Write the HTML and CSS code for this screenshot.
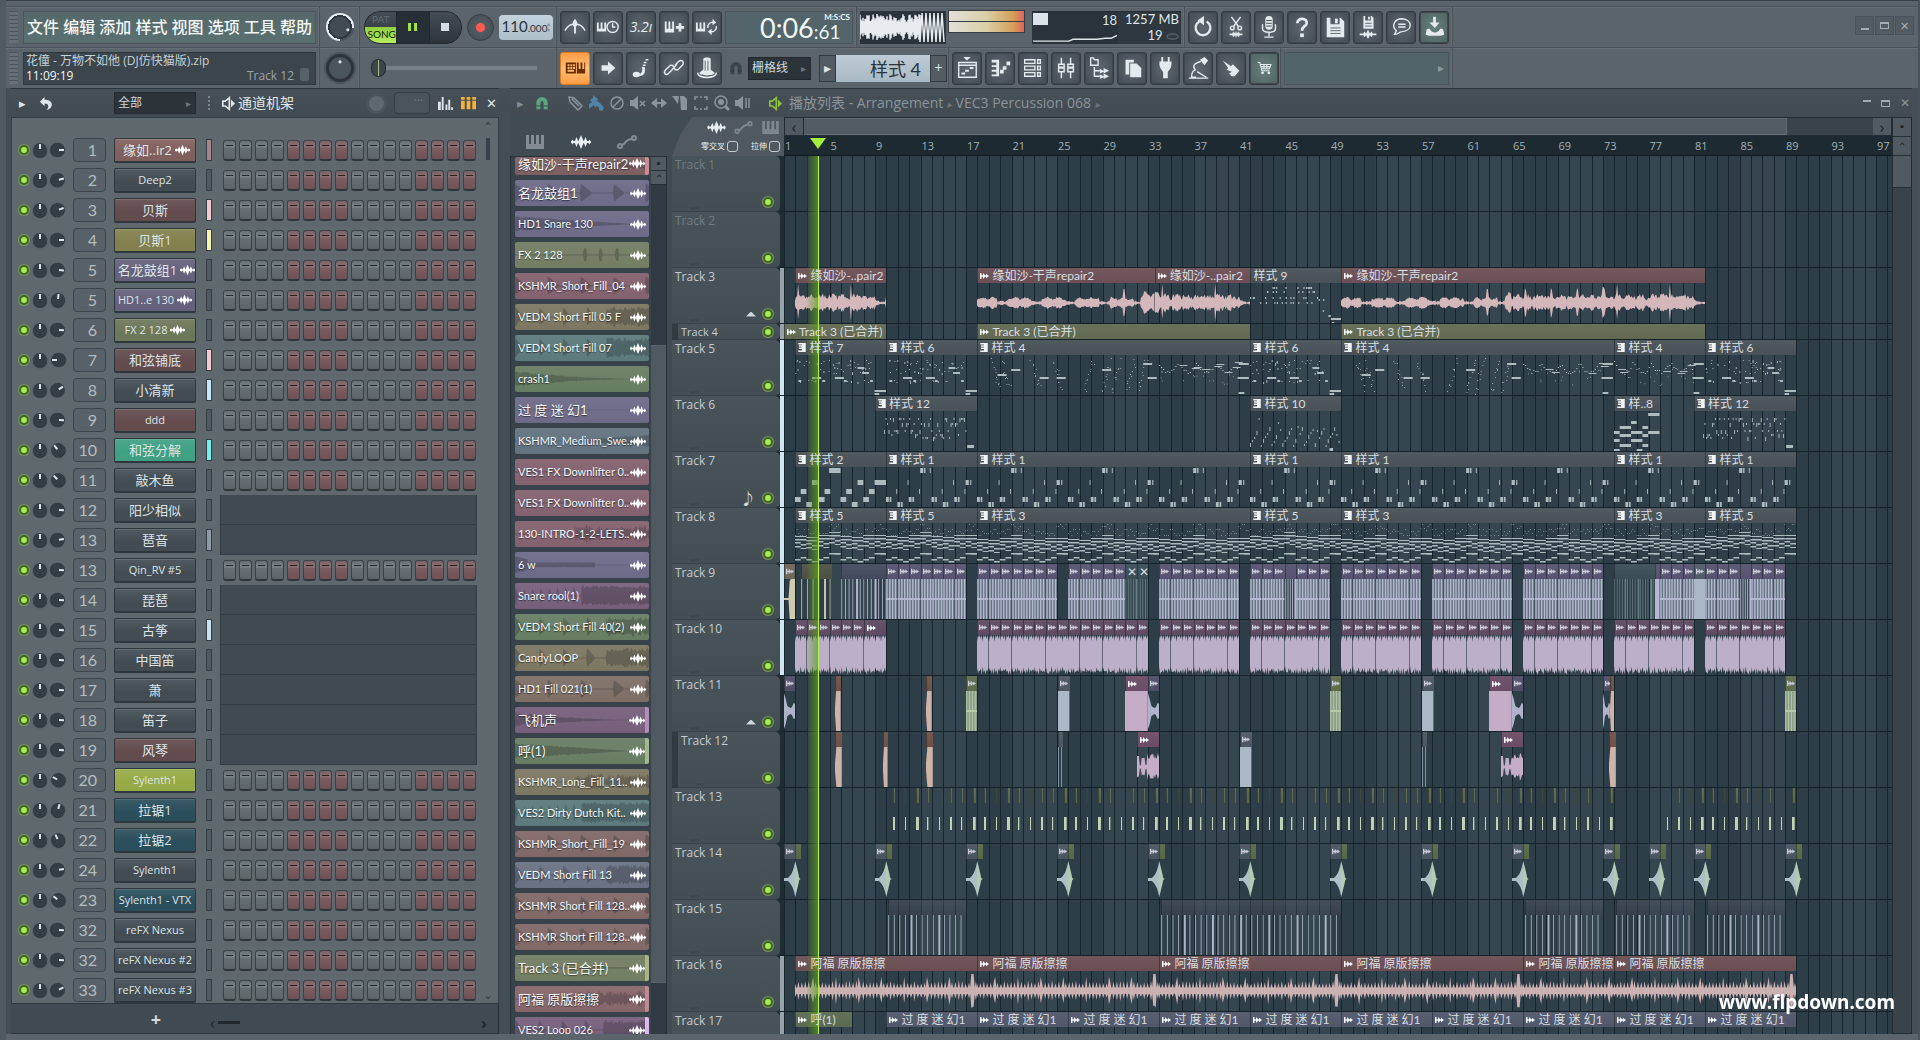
FILE: index.html
```html
<!DOCTYPE html>
<html lang="zh-CN">
<head>
<meta charset="utf-8">
<title>花僮 - 万物不如他 (DJ仿快猫版).zip</title>
<link rel="stylesheet" href="styles.css">
</head>
<body>
<svg class="defs" aria-hidden="true">
  <symbol id="i-wave" viewBox="0 0 20 14"><path d="M0 6h20v2H0zM10 0l3 7-3 7-3-7zM5.500 2L7.500 7l-2 5-2-5zM14.500 2l2 5-2 5-2-5zM1.500 4.500L3 7 1.500 9.500 0 7zM18.500 4.500L20 7l-1.500 2.500L17 7z"/></symbol>
  <symbol id="i-clip" viewBox="0 0 12 10"><path d="M0 1h2v3h2V1l3 3h1V2l4 3-4 3V6H7L4 9V6H2v3H0z"/></symbol>
  <symbol id="i-pat" viewBox="0 0 10 12"><path d="M0 0h10v12H0v-2h5V8H1V6h4V5H1V3h4V2H0z"/></symbol>
  <symbol id="i-keys" viewBox="0 0 18 14"><path d="M0 0h3v9h2V0h3v9h2V0h3v9h2V0h3v14H0z"/></symbol>
  <symbol id="i-auto" viewBox="0 0 20 14"><circle cx="3" cy="11" r="2"/><circle cx="17" cy="3" r="2"/><path d="M5 10C9 9 8 4 15 4" /></symbol>
  <symbol id="i-magnet" viewBox="0 0 14 16"><path d="M0 15V7a7 7 0 0 1 14 0v8H9V7a2 2 0 0 0-4 0v8z"/><path d="M0 11h5M9 11h5" stroke="#2d383f" fill="none"/></symbol>
  <symbol id="i-speaker" viewBox="0 0 16 16"><path d="M1 5h3l5-4v14l-5-4H1z" fill="none" stroke="currentColor" stroke-width="2"/><path d="M11 3l5 5-5 5z"/></symbol>
</svg>
<div class="app">
  <header class="toolbar">
    <div class="bar">
      <div class="group g-menu"><span class="grip"></span>
        <nav class="menu"><button>文件</button><button>编辑</button><button>添加</button><button>样式</button><button>视图</button><button>选项</button><button>工具</button><button>帮助</button></nav>
      </div>
      <div class="group g-knob"><input class="dial dial-ring" type="range" aria-label="主音量"></div>
      <div class="group g-transport">
        <div class="transport">
          <button class="patsong"><span>PAT</span><b>SONG</b></button>
          <button class="pause" aria-label="暂停"><i></i><i></i></button>
          <button class="stop" aria-label="停止"><i></i></button>
        </div>
        <button class="record" aria-label="录音"><i></i></button>
        <div class="tempo"><button aria-label="速度">110<small>.000</small></button><span>▴<br>▾</span></div>
      </div>
      <div class="group g-btns">
        <button class="tb" aria-label="节拍器"><svg viewBox="0 0 26 26"><path d="M11 7l2-3 2 3 1 3-2 3v7h-2v-7l-2-3z"/><path d="M2 17c4-7 7-7 11-7s7 0 11 7" class="ln"/></svg></button>
        <button class="tb" aria-label="等待输入"><svg viewBox="0 0 26 26"><path d="M1 8h2v7h2V8h2v7h2V8h2v10H1z"/><circle cx="18" cy="13" r="6" class="ln"/><path d="M18 9v4h3" class="ln"/></svg></button>
        <button class="tb digits" aria-label="预备拍">3.2ı</button>
        <button class="tb" aria-label="叠录"><svg viewBox="0 0 26 26"><path d="M3 7h2v8h2V7h2v8h2V7h2v12H3zM18 9h3v3h3v3h-3v3h-3v-3h-3v-3h3z"/></svg></button>
        <button class="tb" aria-label="循环录音"><svg viewBox="0 0 26 26"><path d="M1 8h2v7h2V8h2v7h2V8h2v10H1z"/><path d="M14 14a5 5 0 0 1 6-6M23 12a5 5 0 0 1-6 6" class="ln"/><path d="M19 4l4 4-4 3zM18 15l-4 3 4 4z"/></svg></button>
        <div class="clock"><span class="big">0:06</span><div class="side"><small>M:S:CS</small><span class="cs">:61</span></div></div>
      </div>
      <div class="group g-scope">
        <svg class="scope" viewBox="0 0 86 33" preserveAspectRatio="none" id="scope"></svg>
        <div class="vu"><i></i><i></i></div>
        <div class="cpu"><div class="cpu-l"><b></b><span>18</span><svg viewBox="0 0 84 16" preserveAspectRatio="none"><path d="M0 14h36l4-2h24l8-1h6l6-3" class="ln"/></svg></div>
          <div class="cpu-r"><span>1257 MB</span><span class="poly">19 <i></i></span></div></div>
      </div>
      <div class="group g-tools">
        <button class="tb" aria-label="撤销"><svg viewBox="0 0 26 26"><path d="M9 7a8 8 0 1 0 8 0" class="ln mid"/><path d="M14 1v10L7 6z"/></svg></button>
        <button class="tb" aria-label="剪切"><svg viewBox="0 0 26 26"><path d="M8 2l8 11M18 2l-8 11" class="ln"/><circle cx="9" cy="14" r="2" class="ln"/><circle cx="17" cy="14" r="2" class="ln"/><path d="M6 20h3l1-2 2 2 1-3 1 3 2-2 1 2h3v2h-3l-1 2-2-2-1 3-1-3-2 2-1-2H6z"/></svg></button>
        <button class="tb" aria-label="麦克风"><svg viewBox="0 0 26 26"><rect x="9" y="1" width="8" height="15" rx="4"/><path d="M6 10v5c0 5 14 5 14 0v-5M13 18v5M8 24h10" class="ln"/><path d="M10 6h6M10 9h6M10 12h6" stroke="#3a4247"/></svg></button>
        <button class="tb" aria-label="帮助"><svg viewBox="0 0 26 26"><path d="M8 9c0-7 11-6 10 0-1 4-5 3-5 8" class="ln bold"/><rect x="11" y="20" width="4" height="4"/></svg></button>
        <button class="tb" aria-label="保存"><svg viewBox="0 0 26 26"><path d="M4 3h15l4 4v17H4zM8 3v7h10V3z" fill-rule="evenodd"/><rect x="13" y="4" width="3" height="5"/><path d="M8 14h11M8 17h11M8 20h11" stroke="#59646a"/></svg></button>
        <button class="tb" aria-label="另存新版本"><svg viewBox="0 0 26 26"><path d="M8 1h9l2 2v12H8zM10 1v5h6V1z" fill-rule="evenodd"/><path d="M13 2h2v3h-2z"/><path d="M10 9h7M10 12h7" stroke="#59646a"/><path d="M4 20h4l1-2 2 2 2-4 2 4 2-2 1 2h4v2h-4l-1 2-2-2-2 4-2-4-2 2-1-2H4z"/></svg></button>
        <button class="tb" aria-label="消息"><svg viewBox="0 0 26 26"><path d="M6 21l2-4C2 12 6 4 14 4c12 1 12 13 0 14-3 0-3 3-8 3z" class="ln"/><path d="M10 10h8M10 13h8" class="ln"/></svg></button>
        <button class="tb teal" aria-label="下载"><svg viewBox="0 0 26 26"><path d="M12 2h3v6h4l-5 6-6-6h4zM5 16c1-2 4-1 4 0 2 4 8 4 10 0 0-1 3-2 4 0l1 5c0 2-20 2-20 0z"/></svg></button>
      </div>
      <div class="wincontrols"><button aria-label="最小化"><i class="mn"></i></button><button aria-label="最大化"><i class="mx"></i></button><button aria-label="关闭">✕</button></div>
    </div>
    <div class="bar">
      <div class="group g-menu"><span class="grip"></span>
        <div class="hint"><p>花僮 - 万物不如他 (DJ仿快猫版).zip</p><p><b>11:09:19</b><span>Track 12</span><i></i></p></div>
      </div>
      <div class="group g-knob"><input class="dial dial-dark" type="range" aria-label="主音高"></div>
      <div class="group g-transport"><input class="pitch" type="range" min="0" max="100" value="0" aria-label="歌曲位置"></div>
      <div class="group g-pattern">
        <button class="tb orange" aria-label="打字键盘"><svg viewBox="0 0 26 26"><path d="M3 7h11v12H3zM5 9v2h2V9zm3 0v2h2V9zm3 0v2h2V9zM5 12v2h2v-2zm3 0v2h2v-2zm3 0v2h2v-2zM5 15v2h7v-2zM15 7h2v7h2V7h2v7h2V7h1v12h-9z" fill-rule="evenodd"/></svg></button>
        <button class="tb" aria-label="继续"><svg viewBox="0 0 26 26"><path d="M6 10h7V6l8 7-8 7v-4H6z"/></svg></button>
        <button class="tb" aria-label="音符"><svg viewBox="0 0 26 26"><ellipse cx="8" cy="20" rx="4" ry="3"/><path d="M10 22c7 0 8-4 7-10h-3c1 5 0 7-4 8z"/><path d="M15 10h3M16 7h3M18 4h3" class="ln"/></svg></button>
        <button class="tb" aria-label="链接"><svg viewBox="0 0 26 26"><path d="M11 15l-4 4c-3 3-6-1-3-4l4-4c2-2 5-1 4 1M14 10l4-4c3-3 7 1 4 4l-4 4c-2 2-5 1-4-1M9 17l7-8" class="ln"/></svg></button>
        <button class="tb" aria-label="工具"><svg viewBox="0 0 26 26"><path d="M9 3c1-2 7-2 8 0v12l4 3c2 4-18 4-16 0l4-3z"/><path d="M3 18c-1 7 21 7 20 0" class="ln"/><path d="M11 5v11M14 5v11" stroke="#59646a"/></svg></button>
        <svg class="mag"><use href="#i-magnet"/></svg>
        <div class="sel snap"><select aria-label="吸附"><option>栅格线</option></select></div>
        <div class="patsel"><button aria-label="上一个">▸</button><input type="text" value="样式 4" aria-label="样式"><button aria-label="新建">+</button></div>
      </div>
      <div class="group g-windows">
        <button class="tb" aria-label="播放列表"><svg viewBox="0 0 26 26"><path d="M9 1h8l-4 4z"/><path d="M4 7h19v16H4zM4 10h19" class="ln"/><path d="M7 18h4v2H7zM11 15h4v2h-4zM16 12h4v2h-4z"/></svg></button>
        <button class="tb" aria-label="钢琴卷帘"><svg viewBox="0 0 26 26"><path d="M4 4h8v18H4v-2h5v-3H4v-2h5v-3H4v-2h5V7H4zM13 15h4v4h-4zM16 11h4v4h-4zM20 6h4v4h-4z"/></svg></button>
        <button class="tb" aria-label="通道机架"><svg viewBox="0 0 26 26"><path d="M4 4h11v4H4zM4 11h11v4H4zM4 18h11v4H4zM18 4h3v4h-3zM18 11h3v4h-3zM18 18h3v4h-3z" class="ln"/></svg></button>
        <button class="tb" aria-label="混音器"><svg viewBox="0 0 26 26"><path d="M8 2v6M8 18v6M18 2v6M18 18v6M5 9h6v3H5zM5 13h6v4H5zM15 9h6v3h-6zM15 13h6v4h-6z" class="ln"/></svg></button>
        <button class="tb" aria-label="浏览器"><svg viewBox="0 0 26 26"><path d="M4 2h3l1 2h4v6H4zM8 12v10h6M8 16h6" class="ln"/><path d="M14 14l4 2v-3l6 3-6 3v-2l-4 2zM14 20l4 2v-3l6 3-6 3v-2l-4 2z"/></svg></button>
        <button class="tb" aria-label="复制"><svg viewBox="0 0 26 26"><path d="M6 4h9v3h-5v13H6z"/><path d="M11 8h7l5 5v10H11z"/></svg></button>
        <button class="tb" aria-label="插件"><svg viewBox="0 0 26 26"><path d="M9 1h2v5h5V1h2v5h2v3c0 5-4 7-4 9v6h-5v-6c0-2-4-4-4-9V6h2z"/></svg></button>
        <button class="tb" aria-label="演奏"><svg viewBox="0 0 26 26"><path d="M15 4l5-3 4 4-4 5z"/><path d="M16 6c-8 2-9 5-6 9-3 1-4 3-4 8h5M3 24h21M12 17l10 6" class="ln"/></svg></button>
        <button class="tb" aria-label="触摸"><svg viewBox="0 0 26 26"><path d="M4 5l9 6 2-2 7 7-5 6c-6 0-4-2-6-3l3-2-6-2 2-2z"/></svg></button>
        <button class="tb teal" aria-label="商店"><svg class="sm" viewBox="0 0 26 26"><path d="M4 5h3l3 12h11M8 8h15l-2 6H10M13 8v6M17 8v6M9 11h12" class="ln"/><circle cx="11" cy="20" r="2"/><circle cx="20" cy="20" r="2"/></svg></button>
      </div>
      <div class="group g-news"><button class="news" aria-label="新闻">▸</button></div>
    </div>
  </header>

  <main class="desk">
    <section class="rack">
      <div class="title">
        <button class="ic" aria-label="选项">▸</button>
        <button class="ic" aria-label="撤销"><svg viewBox="0 0 16 16"><path d="M7 1v3c11 0 9 10 2 11 3-3 3-7-2-7v3L2 6z"/></svg></button>
        <div class="sel filter"><select aria-label="分组"><option>全部</option></select></div>
        <span class="dots"></span>
        <svg class="spk"><use href="#i-speaker"/></svg><h2>通道机架</h2>
        <span class="swing"></span><span class="lcd">···</span>
        <button class="ic" aria-label="图表"><svg viewBox="0 0 16 16"><path d="M0 6h3v9H0zM4 1h2v14H4zM8 9h2v6H8zM11 4h2v11h-2zM14 12h2v3h-2z"/></svg></button>
        <button class="ic gold" aria-label="步进"><svg viewBox="0 0 16 16"><path d="M0 1h4v3H0zM6 1h4v3H6zM12 1h4v3h-4zM0 5h4v9H0zM6 5h4v9H6zM12 5h4v9h-4z"/></svg></button>
        <button class="ic" aria-label="关闭">✕</button>
      </div>
      <div class="rackbody">
        <div class="channels" id="channels"></div>
        <div class="rackscroll"><span>⌃</span><i></i><b></b><span>⌄</span></div>
      </div>
      <div class="rackfoot"><button aria-label="添加通道">+</button><div><span>‹</span><i></i><b>›</b></div></div>
    </section>

    <section class="playlist">
      <div class="title">
        <button class="ic dim" aria-label="选项">▸</button>
        <svg class="pmag"><use href="#i-magnet"/></svg>
        <div class="ptools">
          <button aria-label="铅笔"><svg viewBox="0 0 16 16"><path d="M2 2l5 1 8 8-4 4-8-8zM5 4l7 7" class="ln"/></svg></button>
          <button class="blue" aria-label="画笔"><svg viewBox="0 0 16 16"><path d="M5 0l5 4-1 2 3 2 4 5-2 3-3-1v-3l-3-1-1 2-1-3-5 4V9l3-2-2-2 3-2z"/></svg></button>
          <button aria-label="删除"><svg viewBox="0 0 16 16"><circle cx="8" cy="8" r="6" class="ln"/><path d="M4 12l8-8" class="ln"/></svg></button>
          <button aria-label="静音"><svg viewBox="0 0 16 16"><path d="M0 5h3l5-4v14l-5-4H0z"/><path d="M10 6l5 5M15 6l-5 5" class="ln"/></svg></button>
          <button aria-label="滑移"><svg viewBox="0 0 16 16"><path d="M6 3v4h4V3l6 5-6 5V9H6v4L0 8z"/></svg></button>
          <button aria-label="切片"><svg viewBox="0 0 16 16"><path d="M0 1h7l-1 8zM8 1h4l3 3v11H9z"/></svg></button>
          <button aria-label="选择"><svg viewBox="0 0 16 16"><path d="M2 5V2h3M11 2h3v3M14 11v3h-3M5 14H2v-3M7 2h2M7 14h2" class="ln"/></svg></button>
          <button aria-label="缩放"><svg viewBox="0 0 16 16"><circle cx="7" cy="7" r="6" class="ln"/><circle cx="7" cy="7" r="3"/><path d="M11 11l4 4" class="ln th"/></svg></button>
          <button aria-label="回放"><svg viewBox="0 0 16 16"><path d="M0 5h3l5-4v14l-5-4H0z"/><path d="M11 3v10M14 3v10" class="ln"/></svg></button>
        </div>
        <svg class="spk green"><use href="#i-speaker"/></svg>
        <h2>播放列表 - Arrangement <i>▸</i> VEC3 Percussion 068 <i>▸</i></h2>
        <div class="pwin"><button aria-label="最小化"><i class="mn"></i></button><button aria-label="最大化"><i class="mx"></i></button><button aria-label="关闭">✕</button></div>
      </div>
      <div class="pbody">
        <aside class="picker">
          <div class="tabs"><svg viewBox="0 0 18 14"><use href="#i-keys"/></svg><svg class="on" viewBox="0 0 20 14"><use href="#i-wave"/></svg><svg class="line" viewBox="0 0 20 14"><use href="#i-auto"/></svg></div>
          <div class="plist"><div class="items" id="items"></div><div class="pscroll"><span>▪</span><span>⌃</span><i></i></div></div>
        </aside>
        <div class="arr">
          <div class="top">
            <div class="corner"><div class="ctabs"><svg class="on" viewBox="0 0 20 14"><use href="#i-wave"/></svg><svg class="line" viewBox="0 0 20 14"><use href="#i-auto"/></svg><svg viewBox="0 0 18 14"><use href="#i-keys"/></svg></div>
              <div class="cchk"><label>零交叉<input type="checkbox"></label><label>拉伸<input type="checkbox"></label></div></div>
            <div class="rul"><div class="hscroll"><button aria-label="向左">‹</button><div><i></i></div><button aria-label="向右">›</button></div><div class="ruler" id="ruler"></div></div>
          </div>
          <div class="tracks" id="tracks"><div class="timeline"><svg id="grid"></svg></div><div class="timeline over"><i class="playhead"></i></div></div>
        </div>
        <div class="vscroll"><span>▪</span><span>⌃</span><i></i></div>
      </div>
    </section>
  </main>
  <div class="mark">www.flpdown.com</div>
</div>
<script src="app.js"></script>
</body>
</html>
```

FILE: styles.css
```css
* { box-sizing: border-box; }
:root {
  --ui: "Open Sans", "Noto Sans CJK SC", sans-serif;
  --narrow: Lato, "Noto Sans CJK SC", sans-serif;
  --ink: #dfe6ea;
}
body { margin: 0; background: #5b646b; color: var(--ink); font: 12px/16px var(--ui); overflow: hidden; }
button, input, select { font: inherit; color: inherit; border: 0; padding: 0; margin: 0; background: none; border-radius: 0; outline: 0; }
h2, p { margin: 0; font-weight: 400; }
svg { fill: currentColor; display: block; }
.defs { position: absolute; width: 0; height: 0; }
.ln { fill: none; stroke: currentColor; stroke-width: 1.5; }
.mid { stroke-width: 2.5; }
.th { stroke-width: 3; }
.bold { stroke-width: 3; }
.line { fill: none; stroke: currentColor; stroke-width: 2; }
.app { height: 100vh; display: flex; flex-direction: column; border-left: 6px solid #505a61; border-right: 2px solid #48525a; overflow: hidden; }

/* toolbar */
.toolbar { flex: none; padding-top: 5px; border-top: 1px solid #363f46; background: #5b646b; }
.bar { height: 41px; display: flex; border-top: 1px solid #49525a; box-shadow: inset 0 1px #656e75; }
.group { display: flex; align-items: center; border-right: 1px solid #49525a; box-shadow: inset -1px 0 #646d74; flex: none; }
.g-menu { width: 314px; gap: 5px; padding-left: 3px; }
.grip { width: 9px; height: 32px; background: repeating-linear-gradient(#4c555c 0 1px, #666f76 1px 4px); }
.menu { width: 293px; height: 33px; display: flex; justify-content: space-around; align-items: center; padding: 0 1px; background: linear-gradient(#566869, #5a7070); border: 1px solid #495759; color: #f0f6f6; font-size: 16px; font-weight: 500; }
.hint { width: 293px; height: 33px; background: #3c454c; border: 1px solid #2f383e; padding: 0 2px; font-size: 12px; color: #c6d1d6; line-height: 15px; }
.hint p { display: flex; }
.hint b { font-weight: 400; flex: 1; color: #f0f6f8; }
.hint span { color: #98a3a9; }
.hint i { width: 9px; height: 13px; margin: 0 4px 0 6px; border-radius: 2px; background: #566067; }
.g-knob { width: 40px; justify-content: center; }
.dial { appearance: none; width: 28px; height: 28px; border-radius: 50%; }
.dial::-webkit-slider-thumb, .kn::-webkit-slider-thumb { appearance: none; width: 0; height: 0; }
.dial-ring { background: radial-gradient(circle at 78% 60%, #cfd8dc 0 1px, transparent 2px), radial-gradient(#414b52 0 10px, #2e373d 10px 12px, transparent 12px), conic-gradient(#e4ebee 0 95deg, #4a545b 95deg 180deg, #e4ebee 180deg); }
.dial-dark { border: 3px solid #2b3338; background: radial-gradient(circle at 50% 22%, #e0e8ec 0 1px, #4b555c 2px); box-shadow: 0 0 0 2px #49535a; }
.g-transport { width: 197px; padding: 0 5px 0 4px; gap: 5px; }
.transport { display: flex; width: 98px; height: 33px; border-radius: 16px; overflow: hidden; border: 1px solid #23292e; background: #23292e; gap: 1px; flex: none; }
.transport button { flex: 1; background: linear-gradient(#444d54, #2d353b); display: flex; align-items: center; justify-content: center; gap: 3px; }
.transport .patsong { flex-direction: column; gap: 0; justify-content: stretch; font: 10px/15px var(--narrow); color: #606a70; }
.patsong b { width: 100%; flex: 1; padding-left: 2px; background: linear-gradient(#8fce3c, #b6ee62); color: #10180a; font-weight: 400; }
.transport .pause { background: #272f36; }
.pause i { width: 3px; height: 8px; background: #a2e043; }
.stop i { width: 8px; height: 8px; background: #d6dde0; }
.record { width: 27px; height: 27px; flex: none; border-radius: 50%; border: 1px solid #343d43; background: radial-gradient(#59636a, #414a50); display: grid; place-items: center; }
.record i { width: 9px; height: 9px; border-radius: 50%; background: #ff5a50; }
.tempo { width: 54px; height: 25px; flex: none; border-radius: 4px; background: linear-gradient(#c3d2dc, #aebfca); color: #2b353c; display: flex; align-items: center; justify-content: center; font: 15px/24px var(--narrow); white-space: nowrap; }
.tempo small { font-size: 10px; }
.tempo span { font-size: 6px; line-height: 6px; color: #7f8f99; }
.pitch { appearance: none; width: 166px; height: 20px; margin-left: 7px; background: linear-gradient(#768086, #768086) 0 50% / 100% 4px no-repeat; }
.pitch::-webkit-slider-thumb { appearance: none; width: 15px; height: 18px; border-radius: 8px; border: 1px solid #1d2428; background: linear-gradient(90deg, #3d464b 6px, #a9bd92 6px 7px, #3d464b 7px); }
.g-btns { width: 300px; padding-left: 3px; gap: 3px; }
.tb { width: 30px; height: 33px; flex: none; border-radius: 3px; border: 1px solid #343c42; background: radial-gradient(#5d676d, #434c52); display: grid; place-items: center; color: #e4ebee; box-shadow: inset 0 0 0 1px #3e474d; }
.tb svg { width: 24px; height: 24px; }
.tb svg.sm { width: 18px; height: 18px; }
.tb.teal { background: radial-gradient(#66807c, #50625f); }
.tb.orange { background: linear-gradient(#ff9c42, #ffc078, #ff9c42); border-color: #e07a20; box-shadow: none; color: #6b2c00; }
.digits { font: italic 14px/20px var(--ui); }
.clock { flex: 1; height: 33px; margin-right: 3px; background: #53646a; border: 1px solid #49575b; display: flex; align-items: center; padding: 0 2px 0 34px; color: #eef7f6; font-family: var(--narrow); }
.clock .big { font-size: 27px; line-height: 31px; }
.clock .side { flex: 1; display: flex; flex-direction: column; }
.clock .cs { font-size: 19px; line-height: 20px; }
.clock small { font: 700 8px/9px var(--narrow); text-align: right; }
.g-scope { width: 328px; padding-left: 3px; gap: 2px; }
.scope { width: 86px; height: 33px; background: #2a333a; color: #e6ecef; flex: none; }
.vu { width: 77px; height: 23px; align-self: flex-start; margin-top: 3px; border: 1px solid #353d43; display: flex; flex-direction: column; gap: 1px; background: #353d43; flex: none; }
.vu i { flex: 1; background: linear-gradient(90deg, #e2e0da, #d9cfa6 50%, #d3a05a 85%, #e0645a); }
.cpu { width: 149px; height: 33px; margin-left: 5px; background: #2f383f; display: flex; font: 13px/15px var(--narrow); border-top: 1px solid #262e34; }
.cpu-l { width: 86px; display: grid; grid-template: 15px 1fr / 1fr auto; padding: 1px; background: #2a333a; }
.cpu-l b { width: 15px; height: 12px; background: #dbe4e8; }
.cpu-l svg { grid-column: 1 / 3; width: 84px; height: 15px; }
.cpu-r { flex: 1; text-align: right; padding: 0 2px; display: flex; flex-direction: column; }
.poly i { display: inline-block; width: 13px; height: 7px; border-radius: 50%; border: 2px solid #4d575d; }
.poly { padding-top: 1px; }
.g-tools { width: 268px; padding-left: 3px; gap: 3px; }
.wincontrols { margin-left: auto; display: flex; gap: 1px; padding: 9px 4px 0 0; }
.wincontrols button { width: 19px; height: 19px; border: 1px solid #49525a; color: #a5aeb3; font-size: 11px; display: grid; place-items: center; line-height: 12px; background: #525b62; }
.mn { width: 8px; height: 2px; background: currentColor; align-self: end; margin-bottom: 4px; }
.mx { width: 9px; height: 7px; border: 1px solid currentColor; border-top-width: 2px; }
.g-pattern { width: 392px; padding-left: 3px; gap: 3px; }
.mag { width: 12px; height: 13px; margin: 0 3px 0 5px; color: #3c454b; flex: none; }
.sel { background: #2c343a; border: 1px solid #23292e; color: #cfd8dc; display: flex; align-items: center; padding: 0 4px 0 3px; flex: none; }
.sel::after { content: "▸"; font-size: 10px; color: #6d777d; }
.sel select { appearance: none; flex: 1; min-width: 0; font-size: 12px; line-height: 16px; }
.snap { width: 63px; height: 23px; }
.filter { width: 82px; height: 22px; margin-left: 54px; }
.patsel { display: flex; align-items: center; margin-left: 5px; }
.patsel button { width: 17px; height: 27px; border: 1px solid #32393f; background: #525c62; font-size: 14px; line-height: 20px; }
.patsel input { width: 94px; height: 27px; background: linear-gradient(#bccbd5, #aabac5); color: #2b343a; text-align: right; padding-right: 9px; font: 18px/24px var(--narrow); }
.g-windows { width: 332px; padding-left: 3px; gap: 3px; }
.g-news { width: 172px; padding-left: 3px; }
.news { width: 165px; height: 33px; background: #526467; border: 1px solid #46565a; text-align: right; padding-right: 4px; color: #8a9a9c; }

/* windows */
.desk { flex: 1; min-height: 0; display: flex; padding-bottom: 6px; }
.title { height: 29px; flex: none; display: flex; align-items: center; border-top: 1px solid #2c353c; background: linear-gradient(#475056, #424b52); }
.title h2 { font-size: 14px; line-height: 20px; }
.ic { width: 16px; height: 18px; display: grid; place-items: center; font-size: 13px; line-height: 16px; }
.ic svg { width: 15px; height: 15px; }
.ic.dim { color: #808a90; }
.gold { color: #f2b33c; }
.spk { width: 13px; height: 15px; flex: none; }
.rack { width: 500px; flex: none; display: flex; flex-direction: column; border: 0 solid #434d54; border-width: 0 7px 0 5px; background: #414a51; box-shadow: inset -1px 0 #262f35; }
.rack .title { padding-left: 3px; gap: 7px; }
.rack .title h2 { margin-left: -4px; }
.dots { width: 2px; height: 15px; margin: 0 5px 0 5px; background: repeating-linear-gradient(#7c868c 0 2px, transparent 2px 4px); }
.swing { width: 21px; height: 21px; border-radius: 50%; margin-left: auto; border: 3px solid #4b545a; background: #5f686e; }
.lcd { width: 36px; height: 22px; border: 1px solid #333c42; border-radius: 4px; background: #4b545b; color: #6f797f; text-align: right; padding-right: 6px; }
.rackbody { flex: 1; min-height: 0; display: flex; overflow: hidden; background: #5f686d; border: 1px solid #343d44; border-bottom-color: #2f383e; padding-top: 17px; }
.channels { flex: 1; }
.ch { height: 30px; display: flex; align-items: center; gap: 8px; padding-left: 7px; }
.ctl { width: 46px; display: flex; align-items: center; gap: 4px; }
.led { appearance: none; width: 10px; height: 10px; flex: none; border-radius: 50%; border: 2px solid #3e6420; background: #a6ea55; box-shadow: 0 0 0 1px #7c9a62; }
.kn { appearance: none; width: 14px; height: 14px; flex: none; border-radius: 50%; background: linear-gradient(#dbe4e8, #dbe4e8) 50% 1px / 2px 5px no-repeat, #343d43; box-shadow: 0 1px 1px #2a3237; transform: rotate(var(--a, 0deg)); }
.num { width: 33px; height: 24px; border: 1px solid #3c454b; border-radius: 4px; background: #586167; color: #b4bdc1; font: 16px/22px var(--narrow); text-align: right; padding-right: 8px; }
.name { width: 82px; height: 25px; border: 1px solid #2e373d; border-bottom-width: 2px; border-radius: 2px; background: linear-gradient(rgb(255 255 255 / 8%), transparent 60%) var(--c); color: #dde4e7; font-size: 11px; line-height: 20px; white-space: nowrap; display: flex; align-items: center; justify-content: center; gap: 3px; box-shadow: inset 0 1px rgb(255 255 255 / 12%); }
.name.cjk { font-size: 13px; }
.name.cjk svg { margin-right: -3px; }
.name svg { width: 15px; height: 12px; color: #fff; flex: none; }
.peak { width: 6px; height: 22px; margin-left: 2px; border: 1px solid #343d43; background: var(--m, #505a61); }
.steps { display: flex; gap: 3px; padding-left: 3px; }
.step { appearance: none; width: 13px; height: 21px; border: 1px solid #3b4247; border-bottom: 2px solid #2f363a; border-radius: 3px; background: linear-gradient(#232a2e, #232a2e) 50% 4px / 7px 1px no-repeat, linear-gradient(#687176, #7a8388 35%, #666f73 38%, #5d6569); }
.step.r { background: linear-gradient(#2e1c1e, #2e1c1e) 50% 4px / 7px 1px no-repeat, linear-gradient(#7a6366, #8a7073 35%, #7c5d60 38%, #6e5255); }
.void { width: 257px; height: 30px; background: #414a51; border: 1px solid #343d43; border-width: 0 1px 1px; }
.rackscroll { width: 20px; display: flex; flex-direction: column; align-items: center; color: #363f45; margin-top: -16px; line-height: 16px; }
.rackscroll i { width: 4px; height: 22px; background: #38414a; margin-top: 3px; }
.rackscroll b { flex: 1; }
.rackfoot { height: 30px; display: flex; align-items: center; border-bottom: 1px solid #2d363c; }
.rackfoot button { width: 20px; margin-left: 135px; font-size: 18px; line-height: 20px; font-weight: 700; color: #d3dbdf; }
.rackfoot div { flex: 1; display: flex; align-items: center; gap: 3px; margin: 8px 12px 0 44px; font-size: 16px; color: #20282d; }
.rackfoot i { width: 22px; height: 3px; background: #20282d; }
.rackfoot b { margin-left: auto; }

.playlist { flex: 1; min-width: 0; display: flex; flex-direction: column; background: #414b52; border-left: 4px solid #434d54; border-right: 6px solid #454f56; }
.playlist .title { padding-left: 2px; color: #8a949a; }
.pmag { width: 12px; height: 13px; margin: 0 19px 0 8px; color: #5da582; flex: none; }
.ptools { display: flex; gap: 5px; }
.ptools svg { width: 16px; height: 16px; }
.ptools .blue { color: #4f84a8; }
.spk.green { color: #8bc43a; margin: 0 7px 0 18px; }
.playlist .title i { font-size: 10px; color: #69737a; }
.pwin { margin-left: auto; display: flex; gap: 4px; }
.pwin button { width: 15px; display: grid; place-items: center; height: 14px; line-height: 14px; }
.playlist .pwin .mn { align-self: start; margin-top: 4px; background: #a0a9ae; }
.playlist .pwin .mx { color: #a0a9ae; }
.pbody { flex: 1; min-height: 0; display: flex; }
.picker { width: 157px; flex: none; display: flex; flex-direction: column; }
.tabs { height: 39px; padding: 18px 0 0 15px; display: flex; gap: 26px; color: #828c92; }
.tabs svg { width: 20px; height: 14px; }
.on { color: #e8eef1; }
.plist { flex: 1; min-height: 0; display: flex; border: 1px solid #262f35; border-bottom: 0; background: #38424a; }
.items { flex: 1; min-width: 0; overflow: hidden; padding-left: 4px; display: flex; flex-direction: column; gap: 5px; }
.items .item:first-child { height: 18px; align-items: flex-start; }
.items .item:first-child span { line-height: 14px; }
.item { width: 134px; height: 26px; flex: none; border-radius: 2px; display: flex; align-items: center; position: relative; border: 0 solid var(--a); background: linear-gradient(rgb(255 255 255 / 6%), transparent) var(--c); color: #f4f7f8; font: 11px/24px var(--narrow); }
.item.cjk { font-size: 13px; }
.item.acc { border-right-width: 4px; }
.item .wv { position: absolute; inset: 2px 0; width: 100%; height: 22px; color: rgb(20 24 28 / 24%); }
.items .item:first-child .wv { height: 13px; }
.item span { flex: 1; min-width: 0; padding-left: 3px; white-space: nowrap; position: relative; text-shadow: 0 1px 1px rgb(0 0 0 / 50%); }
.item .ico { width: 16px; height: 13px; margin-right: 3px; flex: none; position: relative; color: #fff; }
.item.acc .ico { margin-right: 0; }
.pscroll { width: 15px; flex: none; background: #303a42; display: flex; flex-direction: column; align-items: center; color: #1c2429; overflow: hidden; }
.pscroll span, .vscroll span { width: 100%; height: 14px; line-height: 14px; font-size: 10px; text-align: center; background: #505a60; border-bottom: 1px solid #262f35; flex: none; }
.pscroll i { width: 100%; height: 638px; flex: none; margin-top: 160px; background: #4f5960; border: 1px solid #5c666c; border-width: 1px 0; }

.arr { flex: 1; min-width: 0; display: flex; flex-direction: column; margin-left: 5px; }
.top { height: 39px; display: flex; flex: none; }
.corner { width: 112px; padding: 4px 4px 0 20px; background: #4f595f; clip-path: polygon(20px 0, 100% 0, 100% 100%, 0 100%, 8px 18px); }
.ctabs { display: flex; gap: 8px; padding-left: 15px; color: #7d878d; }
.ctabs svg { width: 19px; height: 13px; }
.cchk { display: flex; justify-content: space-between; margin: 6px 0 0 9px; font-size: 8px; line-height: 12px; color: #e8eef0; }
.cchk label { display: flex; align-items: center; gap: 2px; }
.cchk input { appearance: none; width: 11px; height: 11px; border: 1px solid #c2cbd0; border-radius: 3px; }
.rul { flex: 1; min-width: 0; display: flex; flex-direction: column; }
.hscroll { height: 19px; display: flex; border: 1px solid #232c32; border-right: 0; }
.hscroll button { width: 19px; background: #505a60; color: #1c2429; font-size: 16px; line-height: 14px; flex: none; border-right: 1px solid #232c32; }
.hscroll div { flex: 1; background: #39434a; }
.hscroll i { display: block; width: 92%; height: 100%; background: #515b61; border: 1px solid #626c72; border-left: 0; }
.ruler { flex: 1; background: #1d2a31; position: relative; font: 11px/20px var(--ui); color: #a3b0b7; overflow: hidden; border-bottom: 1px solid #121b20; }
.ruler span { position: absolute; padding-left: 1px; }
.ruler i { position: absolute; top: 2px; margin-left: -8px; border: 8px solid transparent; border-top: 11px solid #a4ee3c; border-bottom: 0; }
.vscroll { width: 20px; background: #39434a; flex: none; border: 1px solid #232c32; color: #1c2429; }
.vscroll span { display: block; height: 19px; line-height: 19px; }
.vscroll i { display: block; height: 32px; background: #505a60; border-bottom: 1px solid #262f35; }
.tracks { flex: 1; min-height: 0; overflow: hidden; position: relative; background: #202c33; }
.timeline { position: absolute; left: 112px; right: 0; top: 0; bottom: 0; background: #2e3e48; }
.timeline svg { width: 100%; height: 100%; }
.timeline.over { background: none; pointer-events: none; z-index: 3; }
.playhead { position: absolute; left: 3.1%; margin-left: -11px; width: 12px; height: 100%; background: linear-gradient(90deg, rgb(84 130 40 / 10%), rgb(96 160 30 / 70%)); border-right: 1px solid #b4f05a; }
.track { display: flex; height: 56px; position: relative; }
.track.mini { height: 16px; }
.head { width: 108px; flex: none; position: relative; background: linear-gradient(#49535a, #434d54); border-bottom: 1px solid #3a434a; border-radius: 0 5px 5px 0; padding: 1px 3px; color: #c3ccd1; font-size: 12px; }
.head.off { color: #737d83; }
.head.sub { border-left: 6px solid #303a41; }
.mini .head { padding-top: 0; font-size: 11px; line-height: 15px; }
.head small { position: absolute; left: 18px; bottom: 0; color: #363f45; font-weight: 700; line-height: 12px; }
.head .tail { position: absolute; right: 7px; bottom: 4px; display: flex; align-items: center; gap: 7px; font-size: 16px; line-height: 10px; color: #d7dfe3; }
.head .tail b { width: 10px; height: 5px; background: #d0d8dc; clip-path: polygon(50% 0, 100% 100%, 0 100%); }
.mini .head .tail { bottom: 2px; }
.strip { width: 4px; flex: none; background: var(--s, #202c33); border-bottom: 1px solid #16222a; }
.lane { flex: 1; min-width: 0; position: relative; border-bottom: 1px solid #16222a; }
.clip { position: absolute; top: 0; bottom: 0; overflow: hidden; color: var(--w, #b5c2c6); }
.clip::before { content: ""; position: absolute; inset: 0; background: rgb(33 43 50 / 72%); z-index: -1; }
.clip.bare::before { display: none; }
.cap { height: 15px; display: flex; align-items: center; gap: 3px; padding-left: 2px; background: linear-gradient(rgb(255 255 255 / 5%), transparent) var(--c); color: #d8dfe2; font: 12px/15px var(--narrow); white-space: nowrap; overflow: hidden; border-left: 1px solid rgb(20 26 30 / 45%); }
.cap svg, .cap span { position: relative; z-index: 4; }
.cap svg { width: 9px; height: 8px; flex: none; color: #f1f4f5; }
.cap .p { width: 8px; height: 9px; }
.cap.x { padding-left: 1px; }
.cap.x svg { width: 8px; height: 7px; color: #c9cbd9; }
.clip > svg { width: 100%; height: 40px; }
.mark { position: fixed; right: 25px; bottom: 26px; z-index: 5; color: #fff; font: 700 19px/24px "Noto Sans", sans-serif; }
```

FILE: app.js
```js
const SPAN = 97.4;
const pc = v => (v / SPAN * 100).toFixed(3) + '%';
let seed = 7;
const rnd = () => (seed = (seed * 16807) % 2147483647) / 2147483647;
const use = (id, cls = '') => `<svg class="${cls}"><use href="#i-${id}"/></svg>`;
const isCjk = t => /[^\x00-\x7f]/.test(t) ? ' cjk' : '';

/* ---------- channel rack ---------- */
const DK = '#424c52', RD = '#634b4e', TL = '#2b4e5c', PU = '#65617c';
const channels = [
  [1, '缘如..ir2', '#80605f', 90, 1, '#a98388'], [2, 'Deep2', DK, 75], [3, '贝斯', RD, 70, 0, '#f3c9d3'],
  [4, '贝斯1', '#83804e', 90, 0, '#f6f3ae'], [5, '名龙鼓组1', PU, 95, 1], [5, 'HD1..e 130', PU, 5, 1],
  [6, 'FX 2 128', '#6d7759', 92, 1], [7, '和弦铺底', RD, -90, 0, '#f3c9d3'], [8, '小清新', DK, 55, 0, '#c5e6fb'],
  [9, 'ddd', RD, 92], [10, '和弦分解', '#3fa083', -40, 0, '#72f0ea'], [11, '敲木鱼', DK, -45],
  [12, '阳少相似', DK, 92, 2], [13, '琶音', DK, 80, 2, '#8d9ba5'], [13, 'Qin_RV #5', DK, 92],
  [14, '琵琶', DK, 92, 2], [15, '古筝', DK, 92, 2, '#c9e2f0'], [16, '中国笛', DK, 92, 2], [17, '萧', DK, 92, 2],
  [18, '笛子', DK, 92, 2], [19, '风琴', RD, 92, 2], [20, 'Sylenth1', '#96ab46', -60], [21, '拉锯1', TL, 15],
  [22, '拉锯2', TL, -25], [24, 'Sylenth1', DK, 80], [23, 'Sylenth1 - VTX', TL, -50],
  [32, 'reFX Nexus', DK, 92], [32, 'reFX Nexus #2', DK, 92], [33, 'reFX Nexus #3', DK, 65]
];
const steps = n => Array.from({ length: 16 }, (_, i) =>
  `<input type="checkbox" class="step${i & 4 ? ' r' : ''}" aria-label="${n} ${i + 1}">`).join('');
document.getElementById('channels').innerHTML = channels.map(([n, name, c, a, kind, m]) => `
<div class="ch"><div class="ctl"><input type="checkbox" class="led" checked aria-label="${name}"><input type="range" class="kn" aria-label="${name} 声像"><input type="range" class="kn" style="--a:${a}deg" aria-label="${name} 音量"></div>
<span class="num">${n}</span><button class="name${isCjk(name)}" style="--c:${c}">${name}${kind === 1 ? use('wave') : ''}</button>
<span class="peak"${m ? ` style="--m:${m}"` : ''}></span>${kind === 2 ? '<div class="void"></div>' : `<div class="steps">${steps(name)}</div>`}</div>`).join('');

/* ---------- waveforms ---------- */
function wave(w, env, cls = '', n = w) {
  const up = [], dn = [];
  for (let i = 0; i <= n; i++) {
    const h = Math.min(1, Math.max(.02, env(i / n))) * 20;
    up.push(`${(i / n * w).toFixed(1)} ${(20 - h).toFixed(1)}`);
    dn.unshift(`${(i / n * w).toFixed(1)} ${(20 + h * (.8 + rnd() * .2)).toFixed(1)}`);
  }
  return `<svg class="${cls}" viewBox="0 0 ${w} 40" preserveAspectRatio="none"><path d="M${up.join('L')}L${dn.join('L')}z"/></svg>`;
}
const hit = (t, n) => Math.max(.04, .95 - ((t * n) % 1) * 2.6);
const shapes = {
  none: () => .03,
  flat: t => t < .9 ? .06 : .03,
  decay: t => Math.pow(1 - t, 2) * .8 * (.6 + rnd() * .4),
  slow: t => t > .85 ? .03 : (.75 - t * .85) * (.75 + rnd() * .25),
  hits: t => hit(t, 4.1) * .95,
  drums: t => t > .68 ? .55 + rnd() * .4 : hit(t, 5.6),
  dense: t => t > .5 ? .7 + rnd() * .3 : hit(t, 16),
  late: t => t < .45 ? .04 : .2 + rnd() * .6,
  dots: t => [.52, .64, .76].some(p => Math.abs(t - p) < .012) ? .6 : .04,
  rise: t => t < .5 ? .03 : (t - .5) * .9 + rnd() * .15,
  mid: t => t < .1 ? .8 - t * 3 : t < .6 ? .22 : .03
};
const A = { r: '#886669', p: '#6d6a88', g: '#727d62', m: '#83616f', o: '#7c7761', t: '#5c7a7b', gr: '#677d62', s: '#6a7184', b: '#62727f', v: '#775f7c', n: '#7e6f66' };
const items = [
  ['缘如沙-干声repair2', '#7d5f62', 'late', '#c98d96'], ['名龙鼓组1', A.p, 'hits'], ['HD1 Snare 130', A.p, 'slow'], ['FX 2 128', A.g, 'dots'],
  ['KSHMR_Short_Fill_04', A.m, 'hits'], ['VEDM Short Fill 05 F', A.o, 'drums'], ['VEDM Short Fill 07', A.t, 'drums'], ['crash1', A.gr, 'decay'],
  ['过 度 迷 幻1', A.p, 'none'], ['KSHMR_Medium_Swe..', A.b, 'rise'], ['VES1 FX Downlifter 0..', A.m, 'flat'], ['VES1 FX Downlifter 0..', A.m, 'flat'],
  ['130-INTRO-1-2-LETS..', A.m, 'late'], ['6 w', A.p, 'mid'], ['Snare rool(1)', A.v, 'dense'], ['VEDM Short Fill 40(2)', A.gr, 'drums'],
  ['CandyLOOP', A.o, 'drums'], ['HD1 Fill 021(1)', A.n, 'hits'], ['飞机声', A.v, 'decay', '#b18fb8'], ['呼(1)', A.gr, 'slow', '#a3b88c'],
  ['KSHMR_Long_Fill_11..', A.o, 'late'], ['VES2 Dirty Dutch Kit..', A.t, 'dense'], ['KSHMR_Short_Fill_19', '#806867', 'hits'], ['VEDM Short Fill 13', A.s, 'drums'],
  ['KSHMR Short Fill 128..', '#806867', 'hits'], ['KSHMR Short Fill 128..', '#806867', 'hits'], ['Track 3 (已合并)', A.g, 'flat', '#a9b585'], ['阿福 原版擦擦', '#86666b', 'late', '#c08a92'], ['VES2 Loop 026', A.v, 'drums', '#dcb9ec']
];
document.getElementById('items').innerHTML = items.map(([t, c, s, a]) =>
  `<div class="item${a ? ' acc' : ''}${isCjk(t)}" style="--c:${c}${a ? ';--a:' + a : ''}">${wave(130, shapes[s], 'wv')}<span>${t}</span>${use('wave', 'ico')}</div>`).join('');

document.getElementById('scope').innerHTML = (() => {
  let d = '';
  for (let x = 0; x < 60; x++) { const h = 5 + rnd() * 8; d += `M${x} ${16 - h}V${16 + h}`; }
  d += 'M60 4';
  for (let x = 60; x < 86; x += 2) d += `L${x} ${x % 4 ? 2 : 31}`;
  return `<path d="${d}" fill="none" stroke="currentColor" stroke-width="1.5"/>`;
})();

/* ---------- ruler and grid ---------- */
let r = `<i style="left:${pc(3)}"></i>`;
for (let b = 1; b <= 97; b += 4) r += `<span style="left:${pc(b - 1)}">${b}</span>`;
document.getElementById('ruler').innerHTML = r;
let g = '';
for (let b = 4; b < SPAN; b += 8) g += `<rect x="${pc(b)}" width="${pc(4)}" height="100%" fill="#354650"/>`;
for (let b = 0; b < SPAN; b++) g += `<rect x="${pc(b)}" width="1" height="100%" fill="#17242c" shape-rendering="crispEdges"/>`;
document.getElementById('grid').innerHTML = g;

/* ---------- clips ---------- */
const clip = (s, e, c, w, label, icon, body, cls = '', cap = '') =>
  `<div class="clip ${cls}" style="left:${pc(s)};width:${pc(e - s)};--c:${c}${w ? ';--w:' + w : ''}"><div class="cap ${cap}">${icon === 'pat' ? use('pat', 'p') : icon ? use(icon) : ''}${label ? `<span>${label}</span>` : ''}</div>${body}</div>`;
const notes = (len, list) => `<svg viewBox="0 0 ${len * 20} 40" preserveAspectRatio="none">${list.map(([x, y, w, h = 2]) => `<rect x="${(x * 20).toFixed(1)}" y="${y}" width="${(w * 20).toFixed(1)}" height="${h}"/>`).join('')}</svg>`;
const PAT = '#485157';

function vocal(s, e) {
  const seg = b => {
    if (b < 9) return [2, b - 1];
    if (b < 33) return [0, b - 17];
    if (b < 41) return [2, b - 33];
    if (b < 64) return [0, b - 49];
    return b < 73 ? [1, b - 64] : [2, b - 73];
  };
  const w = Math.round((e - s) * 22);
  return wave(w, t => {
    const b = s + t * (e - s), [k, x] = seg(b);
    const beat = .45 + .55 * Math.abs(Math.sin(x * 3.3));
    if (k === 0) {
      if (x > 12.8 && x < 13) return .7;
      return (Math.sin(x * 2.1) > -.6 ? .22 : .04) * beat + rnd() * .1 + (x > 14.4 ? .28 * beat : 0);
    }
    if (k === 1) return (Math.abs(x % 2.3 - 1.2) < .1 ? .6 : .25 * beat) + rnd() * .22;
    if (Math.abs(x - 4.9) < .08 || Math.abs(x - .25) < .06) return .95;
    return (x > 5.5 ? Math.max(.03, (8 - x) * .12) : .25) * beat + rnd() * (x > 7 ? .05 : .26);
  }, '', Math.round((e - s) * 11));
}
function melody(len, kind) {
  const l = [];
  for (let b = 0; b < len; b += 8) {
    if (kind === 4 && (len === 8 || b >= 16)) {
      for (let x = 0; x < 7; x += .18) l.push([b + x, 6 + Math.round(Math.abs(Math.sin(x * 1.9)) * 9 + rnd() * 4), .1 + (rnd() > .85 ? .6 : 0), 1]);
      for (let i = 0; i < 18; i++) l.push([b + rnd() * 7, 14 + rnd() * 16, .06, 1]);
      l.push([b + 7, 8, .9], [b + 6.9, 22, 1], [b + 7, 37, .5]);
    } else if (kind === 4) {
      for (const st of b ? [1.3, 2.9, 3.7, 5, 6] : [1.2, 2, 4.6, 6.6])
        for (let i = 0; i < 11; i++) l.push([b + st + i * .07 + rnd() * .3, Math.round((b ? 36 - i * 3 : 7 + i * 2.6) + rnd() * 8 - 4), .07, 1]);
      for (const [x, y] of b ? [[3, 14], [7, 22], [6.6, 8]] : [[1.8, 19], [3, 14], [5.5, 22], [7, 22]]) l.push([b + x, y, .8]);
    } else if (kind === 9) {
      for (let i = 0; i < 48; i++) { const x = rnd() * 6.8; l.push([x, [8, 12, 18, 23][i % 4] - 4 + (x > 6 ? 8 : 0), .1]); }
      l.push([6.9, 32, .2], [7.1, 35, .9], [7.2, 39, .2]);
    } else {
      for (let i = 0; i < 56; i++) l.push([b + rnd() * 6.8, [5, 8, 12, 16, 25][i % 5] + (i % 3), .08, i % 4 ? 1 : 2]);
      for (const x of [1.5, 3.5]) l.push([b + x, 22, .8]);
      for (const x of [.3, 2.4, 4.3, 6.6]) l.push([b + x, 25, .25]);
      l.push([b + 5.5, 12, .6], [b + 5.9, 17, .6], [b + 7, 35, 1], [b + 7, 38, .4]);
    }
  }
  return notes(len, l);
}
function sparse(len, ten) {
  const l = [];
  for (let i = 0; i < (ten ? 42 : 56); i++) {
    const x = ten ? i * .19 : .8 + i * .13;
    l.push([x, ten ? 32 - (i % 5) * 4 - (i % 9 === 4 ? 10 : 0) + (i % 3) : [7, 12, 12, 19, 23, 19, 7, 26][Math.floor(rnd() * 8)], .08, i % 3 ? 2 : 4]);
  }
  l.push(ten ? [7, 37, .3, 3] : [8.1, 34, .6, 3]);
  return notes(len, l);
}
function bass(len, two) {
  const l = [];
  for (let b = 0; b < len; b += 8) {
    if (two) {
      for (const x of [0, 2.1, 4, 6]) l.push([x, 30, .5, 5], [x + .5, 22, .5, 5]);
      l.push([1, 35, .5, 5], [5, 35, .5, 5], [1.5, 13, .5, 5], [5.5, 13, .5, 5], [7, 13, 1, 5], [3, 1, 1, 5]);
    } else {
      for (const x of [0, 2, 4, 6]) l.push([b + x, 30, .25, 5], [b + x + .32, 30, .15, 5], [b + x + .9, 22, .08, 5]);
      for (const x of [1, 5]) l.push([b + x, 35, .25, 5], [b + x + .32, 35, .15, 5], [b + x + .9, 13, .08, 5]);
      l.push([b + 7, 13, .28, 5], [b + 7.4, 13, .1, 5], [b + 3, 1, .28, 5], [b + 3.35, 1, .12, 5], [b + 3.85, 1, .08, 5]);
    }
  }
  return notes(len, l);
}
function chords(len, five) {
  const l = [], off = [1, 2, 0, -3, 1, 2, 0, 0];
  for (let b = 0; b < len; b++) {
    const o = off[b % 8] + (five ? 0 : 3), top = b % 4 === 3;
    l.push([b, 12 + o, 1, 1], [b, 15 + o, 1, 1.5], [b, 18 + o, .5, 1.5], [b + .5, 20 + o, .5, 1.5], [b, 22 + o, .5, 1.5], [b + .5, 24 + o, .5, 1]);
    l.push([b, top ? 30 : 36, top ? 1 : .5, 1.5], [b + .5, top ? 30 : b % 2 ? 38 : 34, .5, 1.5]);
    for (let i = 0; i < 6; i++) l.push([b + i * .16, (top ? 1 : 6) + Math.floor(rnd() * 4) * 2, .05, 1]);
  }
  return notes(len, l);
}
const stair = [[3, 2, 1, 3], [1.5, 10, .5, 3], [.5, 15, 1, 3], [2.5, 15, .5, 3], [0, 20, .5, 3], [1.5, 20, 1, 3], [3, 20, 1, 3], [.5, 23, 1, 3], [2.5, 23, .5, 3],
  [0, 28, .5, 3], [1.5, 28, 1, 3], [.5, 33, 1, 3], [2.5, 33, .5, 3], [0, 38, .5, 2], [2, 38, .5, 2]];
const stripes = (len, gap, op = 1, mist = .42, wide = 0) => {
  let s = mist ? `<rect width="${len * 40}" height="40" opacity="${mist}"/><rect y="19" width="${len * 40}" height="2"/>` : '';
  for (let x = 0, i = 0; x < len * 40 - 1; x += gap, i++) s += `<rect x="${x + 1}" width="${wide || (3 + (i % 5 === 4 ? 4 : 0))}" height="40" opacity="${op}"/>`;
  return `<svg viewBox="0 0 ${len * 40} 40" preserveAspectRatio="none">${s}</svg>`;
};
const solid = '<svg viewBox="0 0 10 40" preserveAspectRatio="none"><rect width="10" height="40"/></svg>';
const ones = (s, e, c, w, body, cap) => Array.from({ length: e - s }, (_, i) => clip(s + i, s + i + 1, c, w, '', 'clip', body(s + i), '', cap || 'x')).join('');
const pats = (list, f) => list.map(([s, e, n]) => clip(s, e, PAT, '#aebcc0', n === 8 ? '样..8' : '样式 ' + n, n === 9 ? '' : 'pat', f(e - s, n))).join('');

const lanes = [];
lanes[3] = [[1, 9, '缘如沙-..pair2'], [17, 32.6, '缘如沙-干声repair2'], [32.6, 41, '缘如沙-..pair2'], [49, 81, '缘如沙-干声repair2']]
  .map(([s, e, t]) => clip(s, e, '#6b4f55', '#d3b7ba', t, 'clip', vocal(s, e))).join('') + pats([[41, 49, 9]], () => melody(8, 9));
lanes[4] = [[0, 9], [17, 41], [49, 81]].map(([s, e]) => clip(s, e, '#626951', '', 'Track 3 (已合并)', 'clip', '')).join('');
lanes[5] = pats([[1, 9, 7], [9, 17, 6], [17, 41, 4], [41, 49, 6], [49, 73, 4], [73, 81, 4], [81, 89, 6]], melody);
lanes[6] = pats([[8, 17, 12], [41, 49, 10], [73, 77, 8], [80, 89, 12]], (l, n) => n === 8 ? notes(4, stair) : sparse(l, n === 10));
lanes[7] = pats([[1, 9, 2], [9, 17, 1], [17, 41, 1], [41, 49, 1], [49, 73, 1], [73, 81, 1], [81, 89, 1]], (l, n) => bass(l, n === 2));
lanes[8] = pats([[1, 9, 5], [9, 17, 5], [17, 41, 3], [41, 49, 5], [49, 73, 3], [73, 81, 3], [81, 89, 5]], (l, n) => chords(l, n === 5));

const LV = '#b4b8d0', HV = '#565270', kick = () => stripes(1, 10, 1, .4, 5);
const thin = (s, e, c, w, gap) => clip(s, e, c, w, '', '', stripes(e - s, gap, 1, 0), 'bare');
const ghost = (s, e, n) => `<div class="clip bare" style="left:${pc(s)};width:${pc(e - s)};--c:#3a4d55;--w:#7e9697"><div class="cap x">${n}</div>${stripes(e - s, 9, .7, 0)}</div>`;
lanes[9] = clip(0, 1, '#6d6557', '#cfc9ae', '', 'clip', '<svg viewBox="0 0 10 40" preserveAspectRatio="none"><path d="M0 19h4L5 2l1-2h4v40H5L4 21H0z"/></svg>', '', 'x') +
  thin(1.5, 4.2, '#4d5145', '#c9c6a6', 20) + thin(5, 9, '#444a5e', LV, 13) + ones(9, 16, HV, LV, kick) + ones(17, 24, HV, LV, kick) +
  ones(25, 30, HV, LV, kick) + ghost(30, 31, '✕') + ghost(31, 32, '✕') + ones(33, 40, HV, LV, kick) + ones(41, 44, HV, LV, kick) + thin(44, 45, HV, LV, 8) + ones(45, 48, HV, LV, kick) +
  ones(49, 56, HV, LV, kick) + ones(57, 64, HV, LV, kick) + ones(65, 72, HV, LV, kick) + ghost(73, 76.6, '') + ones(77, 80, HV, LV, kick) + clip(76.6, 77, HV, LV, '', '', solid) +
  clip(80, 81, '#4f5c68', '#a9b8c4', '', 'clip', solid, '', 'x') + ones(81, 84, HV, LV, kick) + thin(84, 85, HV, LV, 8) + ones(85, 88, HV, LV, kick);
const loop = n => wave(n, t => [.68, 1, .88, 1, .8, 1][Math.round(t * n) % 6], '', n);
const pk = (s, e) => ones(s, e, '#5e4a62', '#bcafc9', () => loop(12));
lanes[10] = pk(1, 7) + clip(7, 9, '#5e4a62', '#bcafc9', '', 'clip', loop(24)) +
  pk(17, 32) + [33, 41, 49, 57, 65, 73, 81].map(s => pk(s, s + 7)).join('');
const horn = '<svg viewBox="0 0 20 40" preserveAspectRatio="none"><path d="M0 2l3 6 3 7 5 2 3-1 3-4 3 1v14l-3 1-3-4-3-1-5 2-3 8-3 5z"/></svg>';
const spike = '<svg viewBox="0 0 10 40" preserveAspectRatio="none"><path d="M2 0h8v40H2L0 24v-8z"/></svg>';
const one = (s, e, k) => ({
  lav: () => clip(s, e, '#4f4d66', '#b0b4ca', '', 'clip', horn, '', 'x'),
  brn: () => clip(s, e, '#6e5046', '#cdb3a8', '', '', spike, 'bare'),
  grn: () => clip(s, e, '#5c6c4c', '#b6caa6', '', 'clip', stripes(1, 10, 1, .7), '', 'x'),
  blu: () => clip(s, e, '#4c5662', '#abb9c7', '', 'clip', solid, '', 'x'),
  pnk: () => clip(s, e, '#6b4b65', '#c5adc7', '', 'clip', solid),
  pw: () => clip(s, e, '#6b4b65', '#c5adc7', '', 'clip', wave(24, t => t < .12 ? .55 : t < .2 ? .08 : t < .34 ? .45 : t < .45 ? .1 : .4 + rnd() * .3)),
  lin: () => clip(s, e, '#4c5662', '#abb9c7', '', '', stripes(.5, 13, 1, 0), 'bare')
})[k]();
lanes[11] = [[0, 1, 'lav'], [4.5, 5, 'brn'], [12.5, 13, 'brn'], [16, 17, 'grn'], [24.1, 25.1, 'blu'], [30, 32, 'pnk'], [32, 33, 'lav'], [48, 49, 'grn'], [56.1, 57.1, 'blu'], [62, 64, 'pnk'], [64, 65, 'lav'], [72, 72.6, 'lav'], [72.6, 73, 'brn'], [88, 89, 'grn']].map(a => one(...a)).join('');
lanes[12] = [[4.5, 5.1, 'brn'], [8.7, 9.1, 'brn'], [12.5, 13.1, 'brn'], [24.1, 24.5, 'lin'], [31, 33, 'pw'], [40.1, 41.1, 'blu'], [56.1, 56.5, 'lin'], [63, 65, 'pw'], [72.5, 73.1, 'brn']].map(a => one(...a)).join('');
let hat = '';
for (let b = 9; b < 89; b++) {
  if (b > 72 && b < 77) continue;
  const w = [.18, .1, .26, .12, .12, .2, .1, .24][(b - 9) % 8];
  hat += clip(b + .6, b + .6 + w, '#59664a', '#c2d2b4', '', '', '<svg viewBox="0 0 4 40" preserveAspectRatio="none"><rect width="4" y="14" height="13"/></svg>', 'bare');
}
lanes[13] = hat;
lanes[14] = [0, 8, 16, 24, 32, 40, 48, 56, 64, 72, 76, 80, 88].map(s =>
  clip(s, s + 1, '#485460', '#aebfc6', '', 'clip', '<svg viewBox="0 0 20 40" preserveAspectRatio="none"><path d="M20 1v38c-2-7-5-13-13-17H0v-3h7c8-4 11-11 13-18z"/></svg>', '', 'x') +
  clip(s + 1, s + 1.5, '#566845', '#b4cbb2', '', '', '<svg viewBox="0 0 20 40" preserveAspectRatio="none"><path d="M0 1v38c6-7 12-13 15-18l5-1-5-1C12 14 6 8 0 1z"/></svg>')).join('');
lanes[15] = [[9, 16], [33, 49], [65, 72], [73, 80], [81, 88]].map(([s, e]) => clip(s + .15, e, 'rgb(70 72 88 / 35%)', '#a9b4c4', '', '', stripes(e - s, 20, 1, 0), 'bare')).join('');
lanes[16] = [[1, 17], [17, 33], [33, 49], [49, 65], [65, 73], [73, 89]].map(([s, e]) => clip(s, e, '#6a4e52', '#ccb1b3', '阿福 原版擦擦', 'clip',
  wave((e - s) * 10, t => {
    const x = Math.round(t * (e - s) * 10);
    if (x % 160 > 154 && x % 160 < 158) return .85;
    return x % 20 === 16 ? .7 : x % 3 === 0 ? .36 + rnd() * .16 : .17;
  }))).join('');
lanes[17] = clip(1, 6, '#5a6a50', '#b6caa6', '呼(1)', 'clip', '') + Array.from({ length: 10 }, (_, i) => clip(9 + i * 8, 17 + i * 8, '#50576a', '#b0b8ca', '过 度 迷 幻1', 'clip', '')).join('');

const extra = { 3: '<b></b>', 11: '<b></b>', 7: '♪' };
const strip = n => n > 4 && n < 11 ? '#cfe6f2' : [3, 4, 16, 17].includes(n) ? '#96a2aa' : '';
let html = '';
for (let n = 1; n <= 17; n++) {
  html += `<div class="track${n === 4 ? ' mini' : ''}"><div class="head${n < 3 ? ' off' : ''}${n === 4 || n === 12 ? ' sub' : ''}">Track ${n}${n === 4 ? '' : '<small>...</small>'}<span class="tail">${extra[n] || ''}<input type="checkbox" class="led" checked aria-label="Track ${n}"></span></div>
<div class="strip"${strip(n) ? ` style="--s:${strip(n)}"` : ''}></div><div class="lane">${lanes[n] || ''}</div></div>`;
}
document.getElementById('tracks').insertAdjacentHTML('beforeend', html);
```
